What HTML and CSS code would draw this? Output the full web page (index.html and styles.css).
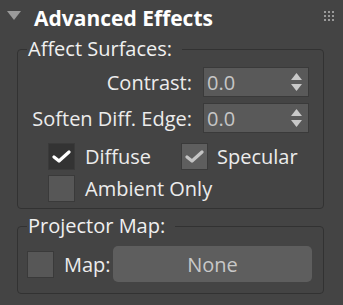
FILE: index.html
```html
<!DOCTYPE html>
<html lang="en">
<head>
  <meta charset="UTF-8" />
  <title>Advanced Effects</title>
  <link rel="stylesheet" href="styles.css">
</head>
<body>
  <div class="rollout">
    <div class="rollout-head">
      <svg class="caret" width="14" height="10" viewBox="0 0 14 10"><polygon points="0,0 14,0 7,9" fill="#9a9a9a"/></svg>
      <span class="rollout-title">Advanced Effects</span>
      <svg class="grip" width="10" height="10" viewBox="0 0 10 10" fill="#9a9a9a">
        <rect x="0" y="0" width="2" height="2"/><rect x="4" y="0" width="2" height="2"/><rect x="8" y="0" width="2" height="2"/>
        <rect x="0" y="4" width="2" height="2"/><rect x="4" y="4" width="2" height="2"/><rect x="8" y="4" width="2" height="2"/>
        <rect x="0" y="8" width="2" height="2"/><rect x="4" y="8" width="2" height="2"/><rect x="8" y="8" width="2" height="2"/>
      </svg>
    </div>

    <fieldset class="group group-surfaces">
      <legend>Affect Surfaces:</legend>
      <div class="spin-grid">
        <label class="spin-label">Contrast:</label>
        <div class="spinner">
          <span class="spin-value">0.0</span>
          <svg class="spin-arrows" width="11" height="19" viewBox="0 0 11 19" fill="#c8c8c8"><polygon points="5.5,0 11,7 0,7"/><polygon points="0,11 11,11 5.5,18"/></svg>
        </div>
        <label class="spin-label">Soften Diff. Edge:</label>
        <div class="spinner">
          <span class="spin-value">0.0</span>
          <svg class="spin-arrows" width="11" height="19" viewBox="0 0 11 19" fill="#c8c8c8"><polygon points="5.5,0 11,7 0,7"/><polygon points="0,11 11,11 5.5,18"/></svg>
        </div>
      </div>
      <div class="checks">
        <div class="check-row">
          <label class="check check-diffuse">
            <span class="box box-on">
              <svg width="19" height="13" viewBox="0 0 19 13"><path d="M2 7 L7 11 L17 2" fill="none" stroke="#fff" stroke-width="3.2" stroke-linecap="round" stroke-linejoin="round"/></svg>
            </span>
            <span class="check-text">Diffuse</span>
          </label>
          <label class="check check-spec">
            <span class="box box-dim">
              <svg width="19" height="13" viewBox="0 0 19 13"><path d="M2 7 L7 11 L17 2" fill="none" stroke="#c4c4c4" stroke-width="3.2" stroke-linecap="round" stroke-linejoin="round"/></svg>
            </span>
            <span class="check-text">Specular</span>
          </label>
        </div>
        <div class="check-row">
          <label class="check">
            <span class="box"></span>
            <span class="check-text">Ambient Only</span>
          </label>
        </div>
      </div>
    </fieldset>

    <fieldset class="group group-projector">
      <legend>Projector Map:</legend>
      <div class="map-row">
        <span class="box"></span>
        <span class="map-label">Map:</span>
        <button class="map-button">None</button>
      </div>
    </fieldset>
  </div>
</body>
</html>
```

FILE: styles.css
```css
body {
  margin: 0;
  background: #444444;
  font-family: "Open Sans", "Noto Sans", sans-serif;
  font-size: 20px;
  color: #ececec;
  width: 343px;
  height: 305px;
  overflow: hidden;
}
.rollout-head {
  height: 39px;
  display: flex;
  align-items: center;
  padding-left: 7px;
  padding-right: 9px;
}
.caret {
  margin-top: -7px;
}
.rollout-title {
  margin-left: 13px;
  font-weight: bold;
  font-size: 21px;
  color: #ffffff;
  margin-top: -4px;
}
.grip {
  margin-left: auto;
  margin-top: -7px;
}
.group {
  margin: 0 19px 0 17px;
  padding: 0;
  border: 1px solid #323232;
  border-radius: 4px;
  min-width: 0;
}
.group legend {
  margin-left: 9px;
  padding: 0 10px 0 1px;
  line-height: 20px;
  color: #f0f0f0;
}
.spin-grid {
  display: grid;
  grid-template-columns: 1fr 106px;
  column-gap: 11px;
  row-gap: 6px;
  padding: 8px 14px 0 0;
  align-items: center;
}
.spin-label {
  text-align: right;
  white-space: nowrap;
}
.spinner {
  height: 30px;
  box-sizing: border-box;
  border: 1px solid #3a3a3a;
  background: #595959;
  display: flex;
  align-items: center;
  padding: 0 6px 0 3px;
}
.spin-value {
  color: #c6c6c6;
  flex: 1;
}
.checks {
  padding: 10px 0 6px 30px;
  display: flex;
  flex-direction: column;
  gap: 5px;
}
.check-row {
  display: flex;
  height: 27px;
}
.check {
  display: flex;
  align-items: center;
  gap: 10px;
}
.check-diffuse {
  width: 133px;
}
.check-spec {
  gap: 9px;
}
.box {
  width: 27px;
  height: 27px;
  flex: none;
  box-sizing: border-box;
  border: 1px solid #3a3a3a;
  background: #575757;
  display: flex;
  align-items: center;
  justify-content: center;
}
.box-on {
  background: #333333;
}
.box-dim {
  background: #5e5e5e;
}
.group-projector {
  margin-top: 7px;
}
.map-row {
  display: flex;
  align-items: center;
  padding: 10px 11px 11px 9px;
}
.map-label {
  margin-left: 10px;
}
.map-button {
  margin-left: auto;
  width: 199px;
  height: 36px;
  border: none;
  border-radius: 5px;
  background: #5e5e5e;
  color: #c8c8c8;
  font-family: inherit;
  font-size: 20px;
}
```
